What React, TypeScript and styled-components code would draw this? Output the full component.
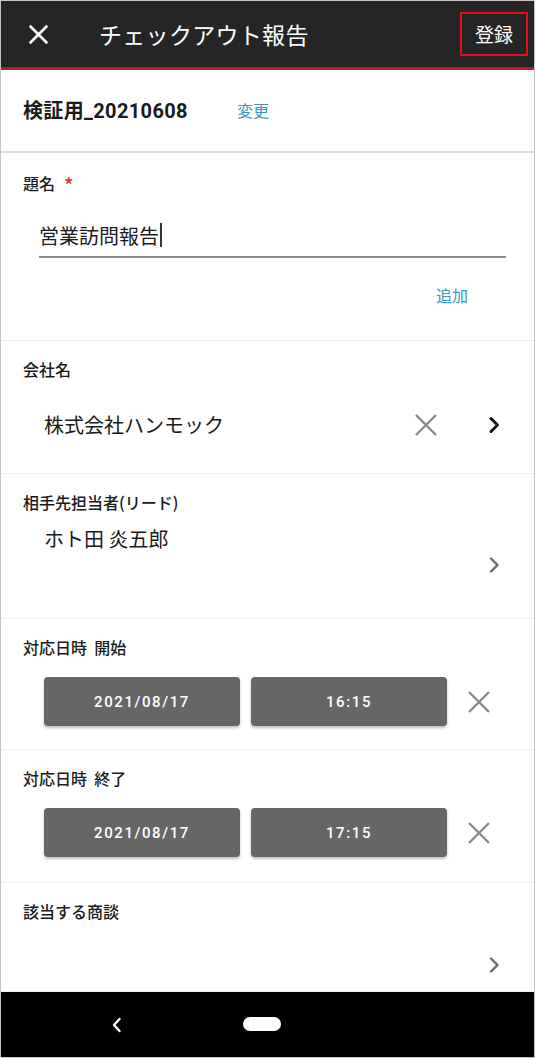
import React from 'react';
import styled, { createGlobalStyle } from 'styled-components';

const GlobalStyle = createGlobalStyle`
  html, body {
    margin: 0;
    padding: 0;
    background: #fff;
  }
  * {
    box-sizing: border-box;
  }
`;

const Frame = styled.div`
  width: 535px;
  height: 1058px;
  border: 1px solid #c4c4c4;
  display: flex;
  flex-direction: column;
  overflow: hidden;
  font-family: 'Noto Sans CJK JP', 'Noto Sans', sans-serif;
  color: #1a1a1a;
`;

const Header = styled.header`
  height: 69px;
  flex-shrink: 0;
  background-color: #252525;
  border-bottom: 3px solid #b8192b;
  display: flex;
  align-items: center;
  padding-left: 27px;

  .title {
    margin-left: 50px;
    color: #fff;
    font-size: 23px;
    letter-spacing: 0.3px;
    flex: 1;
  }
`;

const RegisterButton = styled.div`
  width: 68px;
  height: 44px;
  margin-right: 6px;
  margin-top: -1px;
  border: 2px solid #e3101c;
  color: #fff;
  font-size: 19px;
  display: flex;
  align-items: center;
  justify-content: center;
`;

const Content = styled.main`
  flex: 1;
  display: flex;
  flex-direction: column;
  background: #fff;
`;

const InfoBar = styled.div`
  height: 83px;
  display: flex;
  align-items: center;
  padding: 0 0 2px 22px;
  border-bottom: 2px solid #dcdcdc;

  .name {
    font-size: 20px;
    font-weight: 700;
    letter-spacing: 0.35px;
    font-family: 'Roboto', 'Noto Sans CJK JP', sans-serif;
  }
`;

const LinkText = styled.span<{ $size?: number }>`
  color: #3d97c6;
  font-size: ${(p) => p.$size ?? 16}px;
`;

const Section = styled.section<{ $h: number }>`
  height: ${(p) => p.$h}px;
  flex-shrink: 0;
  padding: 18px 28px 0 22px;
  border-bottom: 1px solid #eeeeee;
  display: flex;
  flex-direction: column;
`;

const Label = styled.div`
  font-size: 16px;
  line-height: 20px;
  font-weight: 500;
  display: flex;
  align-items: center;

  .req {
    color: #e0302e;
    margin-left: 9px;
    font-size: 20px;
    line-height: 20px;
    margin-top: 4px;
  }
`;

const TextInput = styled.div`
  margin: 21px 0 0 16px;
  height: 42px;
  border-bottom: 2px solid #8c8c8c;
  font-size: 20px;
  display: flex;
  align-items: center;
  padding-left: 0;
  padding-bottom: 2px;

  .caret {
    width: 2px;
    height: 24px;
    background: #333;
    margin-left: 1px;
  }
`;

const AddRow = styled.div`
  display: flex;
  justify-content: flex-end;
  margin-top: 25px;
  padding-right: 38px;
`;

const ValueRow = styled.div<{ $mt: number }>`
  display: flex;
  align-items: center;
  margin-top: ${(p) => p.$mt}px;
  padding-left: 21px;
  min-height: 28px;

  .value {
    flex: 1;
    font-size: 20px;
  }
`;

const ClearButton = styled.div<{ $gap: number }>`
  width: 24px;
  height: 24px;
  margin-right: ${(p) => p.$gap}px;
  display: flex;
`;

const ChevronRow = styled.div<{ $mt: number }>`
  display: flex;
  justify-content: flex-end;
  margin-top: ${(p) => p.$mt}px;
`;

const DateRow = styled.div`
  display: flex;
  align-items: center;
  margin-top: 20px;
  padding-left: 21px;
  gap: 11px;
`;

const PickerButton = styled.div`
  width: 196px;
  height: 49px;
  border-radius: 4px;
  background: #666666;
  color: #fff;
  font-family: 'Roboto', 'Noto Sans', sans-serif;
  font-size: 15px;
  font-weight: 500;
  letter-spacing: 1.6px;
  display: flex;
  align-items: center;
  justify-content: center;
  box-shadow: 0 2px 3px rgba(0, 0, 0, 0.25);
`;

const PickerClear = styled.div`
  margin-left: 9px;
  width: 24px;
  height: 24px;
  display: flex;
`;

const NavBar = styled.nav`
  height: 65px;
  flex-shrink: 0;
  background: #000;
  display: flex;
  align-items: center;
  padding-left: 106px;

  .pill {
    width: 38px;
    height: 14px;
    border-radius: 7px;
    background: #fff;
    margin-left: 116px;
    margin-top: -1px;
  }
`;

const CloseIcon = ({ color, size, width }: { color: string; size: number; width: number }) => (
  <svg width={size} height={size} viewBox="0 0 24 24">
    <path d="M2 2L22 22M22 2L2 22" stroke={color} strokeWidth={width} fill="none" />
  </svg>
);

const Chevron = ({ color, bold }: { color: string; bold?: boolean }) => (
  <svg width="24" height="24" viewBox="0 0 24 24">
    <path
      d="M9 5.5L15.5 12L9 18.5"
      stroke={color}
      strokeWidth={bold ? 3 : 2.4}
      fill="none"
      strokeLinecap="round"
      strokeLinejoin="round"
    />
  </svg>
);

const DateTimeRow = ({ date, time }: { date: string; time: string }) => (
  <DateRow>
    <PickerButton>{date}</PickerButton>
    <PickerButton>{time}</PickerButton>
    <PickerClear>
      <CloseIcon color="#8a8a8a" size={24} width={2.4} />
    </PickerClear>
  </DateRow>
);

const App: React.FC = () => {
  return (
    <Frame>
      <GlobalStyle />
      <Header>
        <CloseIcon color="#fff" size={21} width={3} />
        <div className="title">チェックアウト報告</div>
        <RegisterButton>登録</RegisterButton>
      </Header>
      <Content>
        <InfoBar>
          <span className="name">検証用_20210608</span>
          <LinkText style={{ marginLeft: 49 }}>変更</LinkText>
        </InfoBar>

        <Section $h={188}>
          <Label>
            題名<span className="req">*</span>
          </Label>
          <TextInput>
            営業訪問報告<span className="caret" />
          </TextInput>
          <AddRow>
            <LinkText>追加</LinkText>
          </AddRow>
        </Section>

        <Section $h={133}>
          <Label>会社名</Label>
          <ValueRow $mt={31}>
            <span className="value">株式会社ハンモック</span>
            <ClearButton $gap={44}>
              <CloseIcon color="#8a8a8a" size={24} width={2.4} />
            </ClearButton>
            <Chevron color="#111" bold />
          </ValueRow>
        </Section>

        <Section $h={145}>
          <Label>相手先担当者(リード)</Label>
          <ValueRow $mt={12}>
            <span className="value">ホト田 炎五郎</span>
          </ValueRow>
          <ChevronRow $mt={0}>
            <Chevron color="#6a6a6a" />
          </ChevronRow>
        </Section>

        <Section $h={131}>
          <Label>対応日時&nbsp;&nbsp;開始</Label>
          <DateTimeRow date="2021/08/17" time="16:15" />
        </Section>

        <Section $h={133}>
          <Label>対応日時&nbsp;&nbsp;終了</Label>
          <DateTimeRow date="2021/08/17" time="17:15" />
        </Section>

        <Section $h={109}>
          <Label>該当する商談</Label>
          <ChevronRow $mt={32}>
            <Chevron color="#6a6a6a" />
          </ChevronRow>
        </Section>
      </Content>
      <NavBar>
        <svg width="20" height="20" viewBox="0 0 20 20">
          <path d="M12.5 4L7 10L12.5 16" stroke="#fff" strokeWidth="2.4" fill="none" strokeLinecap="round" strokeLinejoin="round" />
        </svg>
        <div className="pill" />
      </NavBar>
    </Frame>
  );
};

export default App;
